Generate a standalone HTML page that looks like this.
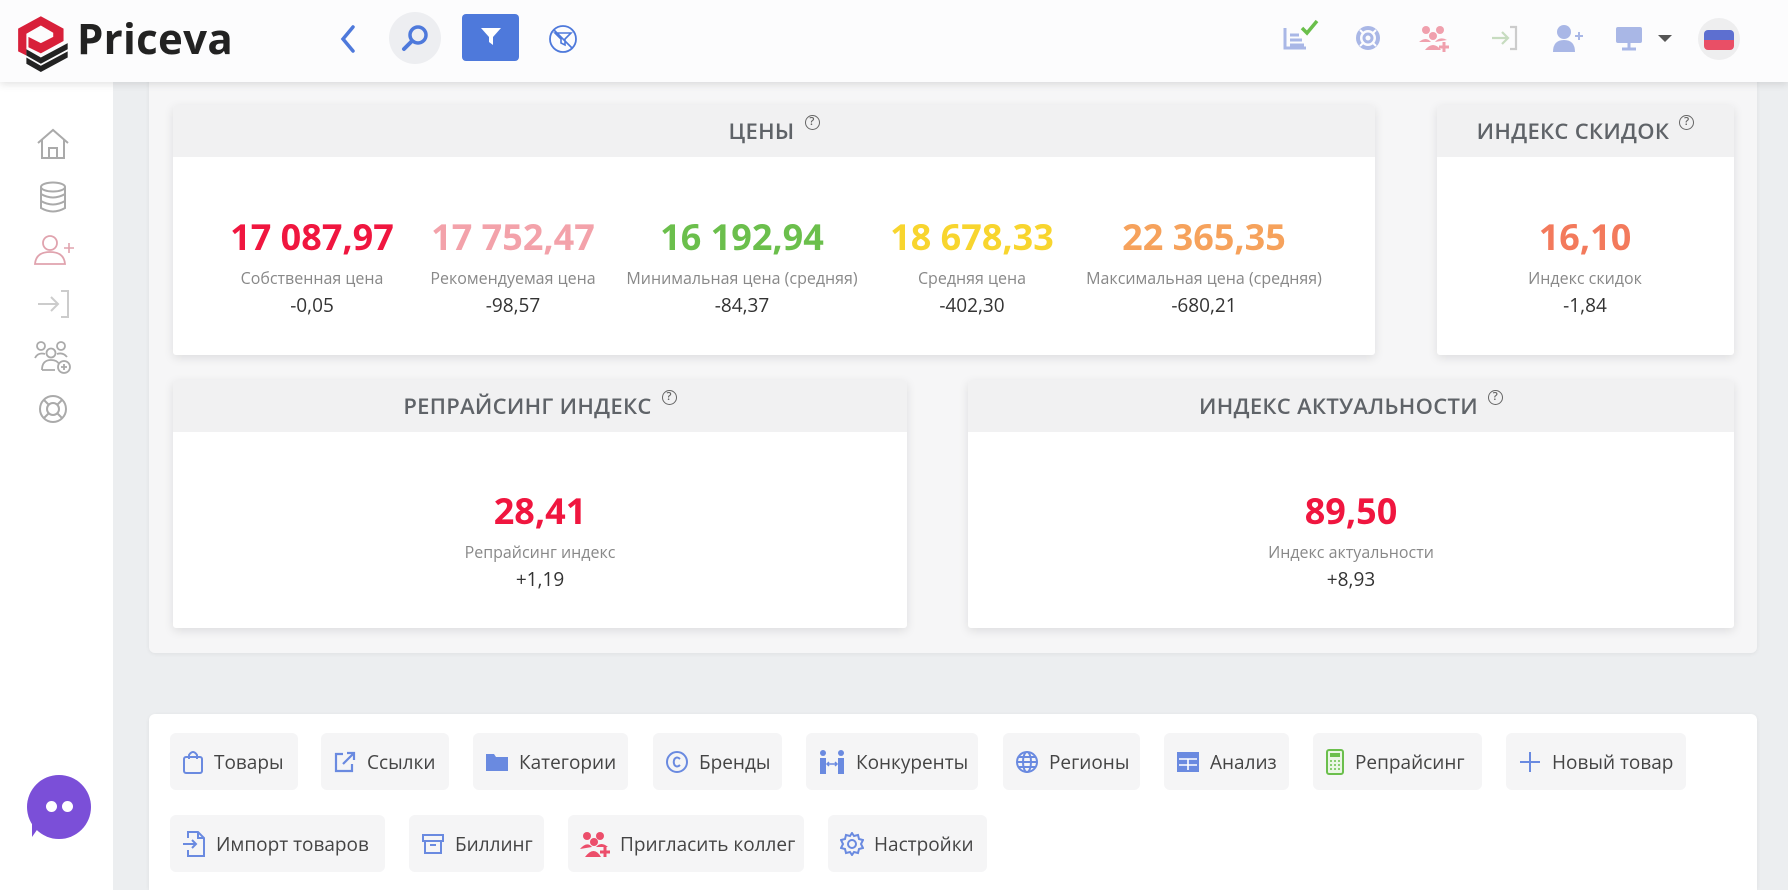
<!DOCTYPE html>
<html><head><meta charset="utf-8"><style>
*{box-sizing:border-box;margin:0;padding:0}
html,body{width:1788px;height:890px;overflow:hidden}
body{background:#eceef0;font-family:"Open Sans","Liberation Sans","DejaVu Sans",sans-serif;position:relative;color:#444}
.abs{position:absolute}
#hdr{left:0;top:0;width:1788px;height:82px;background:#fcfcfd;box-shadow:0 2px 8px rgba(0,0,0,.12);z-index:5}
#side{left:0;top:82px;width:113px;height:808px;background:#fff}
.panel{background:#f6f6f7;border-radius:6px;box-shadow:0 1px 4px rgba(0,0,0,.06)}
.card{background:#fff;box-shadow:0 3px 10px rgba(0,0,0,.10);border-radius:3px;overflow:hidden}
.card .h{height:52px;background:#f1f1f2;text-align:center;font-size:22px;font-weight:600;color:#5f6368;line-height:52px;letter-spacing:.3px}
.q{display:inline-block;width:15px;height:15px;border:1.5px solid #666;border-radius:50%;font-size:11px;line-height:12px;text-align:center;vertical-align:top;margin:10px 0 0 10px;font-weight:600;color:#666}
.m{position:absolute;text-align:center;transform:translateX(-50%);white-space:nowrap}
.v{font-size:36px;font-weight:700;line-height:40px}
.l{font-size:16px;color:#888;line-height:22px;margin-top:10px}
.d{font-size:19px;color:#333;line-height:28px;margin-top:2px}
.btn{position:absolute;height:57px;background:#f5f5f6;border-radius:6px;font-size:19px;color:#444;display:flex;align-items:center;padding-left:12px;white-space:nowrap}
.btn svg{margin-right:10px;flex:none}
</style></head><body>

<div id="hdr" class="abs">
 <svg class="abs" style="left:14px;top:8px" width="64" height="66" viewBox="0 0 62 60">
  <path d="M4 18 L26 6 L48 18 L48 30 L26 42 L14 36 L14 26 L26 32 L38 26 L38 22 L26 15 L12 23 L12 44 L4 40Z" fill="#d8203a"/>
  <path d="M12 38 L26 46 L52 32 L52 38 L26 52 L12 44Z" fill="#222"/>
  <path d="M12 46 L26 54 L52 40 L52 46 L26 60 L12 52Z" fill="#222"/>
 </svg>
 <div class="abs" style="left:77px;top:10px;font-size:42px;font-weight:700;color:#222;letter-spacing:.3px">Priceva</div>
 <svg class="abs" style="left:338px;top:24px" width="20" height="30"><path d="M15 3 L5 15 L15 27" stroke="#4e79db" stroke-width="3.5" fill="none" stroke-linecap="round"/></svg>
 <div class="abs" style="left:389px;top:12px;width:52px;height:52px;border-radius:50%;background:#edeef1"></div>
 <svg class="abs" style="left:400px;top:23px" width="30" height="30"><circle cx="18" cy="12" r="8" stroke="#4e79db" stroke-width="3.5" fill="none"/><path d="M12 18 L4 26" stroke="#4e79db" stroke-width="4" stroke-linecap="round"/></svg>
 <div class="abs" style="left:462px;top:14px;width:57px;height:47px;border-radius:4px;background:#4e79db"></div>
 <svg class="abs" style="left:479px;top:26px" width="24" height="22"><path d="M2 2 H22 L14 11 V19 L10 16 V11Z" fill="#fff"/></svg>
 <svg class="abs" style="left:548px;top:24px" width="30" height="30"><circle cx="15" cy="15" r="13" stroke="#4e79db" stroke-width="1.8" fill="none"/><path d="M7 9 H23 L17 15 V21 L13 19 V15Z M6 6 L24 24" stroke="#4e79db" stroke-width="1.6" fill="none"/></svg>

 <svg class="abs" style="left:1282px;top:16px" width="42" height="36"><path d="M3 12 V32 H24 M8 19 H17 M8 24 H20 M8 29 H22" stroke="#a9b7e6" stroke-width="3" fill="none"/><path d="M20 12 L25 17 L35 5" stroke="#6abf4b" stroke-width="3.5" fill="none"/></svg>
 <svg class="abs" style="left:1354px;top:24px" width="28" height="28"><circle cx="14" cy="14" r="10" stroke="#a9b7e6" stroke-width="4" fill="none"/><circle cx="14" cy="14" r="4" stroke="#a9b7e6" stroke-width="3" fill="none"/><path d="M6 6 L10 10 M22 6 L18 10 M6 22 L10 18 M22 22 L18 18" stroke="#fff" stroke-width="2"/></svg>
 <svg class="abs" style="left:1418px;top:24px" width="36" height="28" fill="#f0a0ad"><circle cx="8" cy="6" r="4"/><circle cx="22" cy="6" r="4"/><circle cx="15" cy="12" r="4"/><path d="M1 18 Q8 12 13 18Z M17 18 Q22 12 29 16Z M7 26 Q15 16 23 26Z"/><path d="M26 18 V28 M21 23 H31" stroke="#f0a0ad" stroke-width="3"/></svg>
 <svg class="abs" style="left:1490px;top:24px" width="30" height="28"><path d="M2 14 H18 M12 8 L18 14 L12 20" stroke="#c7dcc0" stroke-width="2.2" fill="none"/><path d="M20 3 H26 V25 H20" stroke="#ccc" stroke-width="2.2" fill="none"/></svg>
 <svg class="abs" style="left:1552px;top:24px" width="32" height="28" fill="#a9b7e6"><circle cx="12" cy="8" r="7"/><path d="M1 28 Q1 16 12 16 Q23 16 23 28Z"/><path d="M27 8 V16 M23 12 H31" stroke="#a9b7e6" stroke-width="2"/></svg>
 <svg class="abs" style="left:1614px;top:25px" width="30" height="26"><rect x="2" y="2" width="26" height="16" rx="2" fill="#a9b7e6"/><path d="M15 18 V23 M8 24 H22" stroke="#a9b7e6" stroke-width="3"/></svg>
 <svg class="abs" style="left:1658px;top:35px" width="14" height="8"><path d="M0 0 H14 L7 7Z" fill="#555"/></svg>
 <div class="abs" style="left:1698px;top:18px;width:42px;height:42px;border-radius:50%;background:#eeeeef"></div>
 <div class="abs" style="left:1704px;top:30px;width:30px;height:20px;border-radius:4px;overflow:hidden;background:linear-gradient(#5d6fd0 0 50%,#e94f66 50%)"></div>
</div>

<div id="side" class="abs">
 <svg class="abs" style="left:35px;top:46px" width="36" height="32"><path d="M3 15 L18 2 L33 15 M7 12 V30 H29 V12 M14 30 V20 H22 V30" stroke="#aaa" stroke-width="2" fill="none"/></svg>
 <svg class="abs" style="left:38px;top:99px" width="30" height="34"><ellipse cx="15" cy="6" rx="12" ry="4.5" stroke="#aaa" stroke-width="2" fill="none"/><path d="M3 6 V27 Q15 34 27 27 V6 M3 13 Q15 20 27 13 M3 20 Q15 27 27 20" stroke="#aaa" stroke-width="2" fill="none"/></svg>
 <svg class="abs" style="left:32px;top:152px" width="42" height="32"><circle cx="18" cy="9" r="7" stroke="#e0a3ae" stroke-width="1.8" fill="none"/><path d="M3 30 Q4 18 18 18 Q32 18 33 30Z" stroke="#e0a3ae" stroke-width="1.8" fill="none"/><path d="M37 9 V19 M32 14 H42" stroke="#e0a3ae" stroke-width="1.6"/></svg>
 <svg class="abs" style="left:36px;top:206px" width="36" height="32"><path d="M2 16 H22 M15 9 L22 16 L15 23" stroke="#ccc" stroke-width="2" fill="none"/><path d="M25 3 H32 V29 H25" stroke="#ccc" stroke-width="2" fill="none"/></svg>
 <svg class="abs" style="left:33px;top:258px" width="40" height="34" stroke="#aaa" stroke-width="1.8" fill="none"><circle cx="8" cy="6" r="4"/><circle cx="28" cy="6" r="4"/><circle cx="18" cy="13" r="4.5"/><path d="M2 18 Q5 12 12 14 M34 17 Q30 12 24 14 M9 30 Q9 20 18 20 Q24 20 26 24 M9 30 H22"/><circle cx="31" cy="27" r="6"/><path d="M31 24 V30 M28 27 H34"/></svg>
 <svg class="abs" style="left:37px;top:311px" width="32" height="32"><circle cx="16" cy="16" r="13" stroke="#aaa" stroke-width="2" fill="none"/><circle cx="16" cy="16" r="6" stroke="#aaa" stroke-width="2" fill="none"/><path d="M7 7 L12 12 M25 7 L20 12 M7 25 L12 20 M25 25 L20 20" stroke="#aaa" stroke-width="2"/></svg>
 <div class="abs" style="left:27px;top:693px;width:64px;height:64px;border-radius:50%;background:#7b4fd8"></div>
 <div class="abs" style="left:32px;top:735px;width:0;height:0;border-left:14px solid #7b4fd8;border-bottom:20px solid transparent"></div>
 <div class="abs" style="left:46px;top:719px;width:11px;height:11px;border-radius:50%;background:#fff"></div>
 <div class="abs" style="left:62px;top:719px;width:11px;height:11px;border-radius:50%;background:#fff"></div>
</div>

<div class="abs panel" style="left:149px;top:70px;width:1608px;height:583px"></div>
<div class="abs panel" style="left:149px;top:714px;width:1608px;height:176px;background:#fff;border-radius:6px 6px 0 0"></div>

<div class="abs card" style="left:173px;top:105px;width:1202px;height:250px">
 <div class="h">ЦЕНЫ<span class="q">?</span></div>
 <div class="m" style="left:139px;top:112px"><div class="v" style="color:#f0163f">17 087,97</div><div class="l">Собственная цена</div><div class="d">-0,05</div></div>
 <div class="m" style="left:340px;top:112px"><div class="v" style="color:#f3a2aa">17 752,47</div><div class="l">Рекомендуемая цена</div><div class="d">-98,57</div></div>
 <div class="m" style="left:569px;top:112px"><div class="v" style="color:#6bbf4c">16 192,94</div><div class="l">Минимальная цена (средняя)</div><div class="d">-84,37</div></div>
 <div class="m" style="left:799px;top:112px"><div class="v" style="color:#f8d52e">18 678,33</div><div class="l">Средняя цена</div><div class="d">-402,30</div></div>
 <div class="m" style="left:1031px;top:112px"><div class="v" style="color:#f6a25c">22 365,35</div><div class="l">Максимальная цена (средняя)</div><div class="d">-680,21</div></div>
</div>

<div class="abs card" style="left:1437px;top:105px;width:297px;height:250px">
 <div class="h">ИНДЕКС СКИДОК<span class="q">?</span></div>
 <div class="m" style="left:148px;top:112px"><div class="v" style="color:#f37a5c">16,10</div><div class="l">Индекс скидок</div><div class="d">-1,84</div></div>
</div>

<div class="abs card" style="left:173px;top:380px;width:734px;height:248px">
 <div class="h">РЕПРАЙСИНГ ИНДЕКС<span class="q">?</span></div>
 <div class="m" style="left:367px;top:111px"><div class="v" style="color:#f0163f">28,41</div><div class="l">Репрайсинг индекс</div><div class="d">+1,19</div></div>
</div>

<div class="abs card" style="left:968px;top:380px;width:766px;height:248px">
 <div class="h">ИНДЕКС АКТУАЛЬНОСТИ<span class="q">?</span></div>
 <div class="m" style="left:383px;top:111px"><div class="v" style="color:#f0163f">89,50</div><div class="l">Индекс актуальности</div><div class="d">+8,93</div></div>
</div>

<div class="btn" style="left:170px;top:733px;width:128px"><svg width="22" height="26" stroke="#6a8ae0" stroke-width="2" fill="none"><rect x="2" y="8" width="18" height="16" rx="2"/><path d="M7 10 V6 Q11 0 15 6 V10"/></svg>Товары</div>
<div class="btn" style="left:321px;top:733px;width:128px"><svg width="24" height="24" stroke="#6a8ae0" stroke-width="2.2" fill="none"><path d="M10 4 H3 V21 H19 V14 M10 14 L21 3 M14 3 H21 V10"/></svg>Ссылки</div>
<div class="btn" style="left:473px;top:733px;width:155px"><svg width="24" height="22"><path d="M1 3 H9 L11 6 H23 V20 H1Z" fill="#6a8ae0"/></svg>Категории</div>
<div class="btn" style="left:653px;top:733px;width:129px"><svg width="24" height="24"><circle cx="12" cy="12" r="10" stroke="#6a8ae0" stroke-width="2" fill="none"/><path d="M15 9 Q12 6 9.5 9 Q8 12 9.5 15 Q12 18 15 15" stroke="#6a8ae0" stroke-width="2" fill="none"/></svg>Бренды</div>
<div class="btn" style="left:806px;top:733px;width:172px"><svg width="28" height="26" fill="#6a8ae0"><circle cx="5" cy="4" r="3"/><circle cx="23" cy="4" r="3"/><rect x="2" y="9" width="6" height="16"/><rect x="20" y="9" width="6" height="16"/><path d="M9 15 H19 M11 13 L9 15 L11 17 M17 13 L19 15 L17 17" stroke="#6a8ae0" stroke-width="1.5" fill="none"/></svg>Конкуренты</div>
<div class="btn" style="left:1003px;top:733px;width:137px"><svg width="24" height="24" stroke="#6a8ae0" stroke-width="2" fill="none"><circle cx="12" cy="12" r="10"/><ellipse cx="12" cy="12" rx="4" ry="10"/><path d="M2 12 H22 M4 7 H20 M4 17 H20"/></svg>Регионы</div>
<div class="btn" style="left:1164px;top:733px;width:125px"><svg width="24" height="24"><rect x="1" y="2" width="22" height="20" fill="#6a8ae0"/><path d="M3 9 H21 M12 9 V20 M3 15 H21" stroke="#fff" stroke-width="1.6"/></svg>Анализ</div>
<div class="btn" style="left:1313px;top:733px;width:169px"><svg width="20" height="26"><rect x="2" y="1" width="16" height="24" rx="2" stroke="#6bbf4c" stroke-width="2" fill="#eaf6e5"/><rect x="5" y="4" width="10" height="4" fill="#6bbf4c"/><path d="M5 12 H15 M5 16 H15 M5 20 H15" stroke="#6bbf4c" stroke-width="1.6" stroke-dasharray="2 2"/></svg>Репрайсинг</div>
<div class="btn" style="left:1506px;top:733px;width:180px"><svg width="24" height="24"><path d="M12 2 V22 M2 12 H22" stroke="#6a8ae0" stroke-width="2"/></svg>Новый товар</div>

<div class="btn" style="left:170px;top:815px;width:215px"><svg width="24" height="28" stroke="#6a8ae0" stroke-width="2" fill="none"><path d="M6 8 V2 H16 L22 8 V26 H6 V20 M16 2 V8 H22 M1 14 H14 M10 10 L14 14 L10 18"/></svg>Импорт товаров</div>
<div class="btn" style="left:409px;top:815px;width:135px"><svg width="24" height="24" stroke="#6a8ae0" stroke-width="2" fill="none"><rect x="2" y="3" width="20" height="6"/><path d="M4 9 V21 H20 V9 M9 13 H15"/></svg>Биллинг</div>
<div class="btn" style="left:568px;top:815px;width:236px"><svg width="30" height="26" fill="#ec4e6b"><circle cx="7" cy="5" r="4"/><circle cx="20" cy="5" r="4"/><circle cx="14" cy="11" r="4"/><path d="M0 18 Q7 10 12 16Z M16 16 Q21 10 28 16Z M5 26 Q14 14 21 26Z"/><path d="M25 16 V26 M20 21 H30" stroke="#ec4e6b" stroke-width="3"/></svg>Пригласить коллег</div>
<div class="btn" style="left:828px;top:815px;width:159px"><svg width="24" height="24" stroke="#6a8ae0" stroke-width="2" fill="none"><circle cx="12" cy="12" r="4"/><path d="M12 1 L14 4 L18 3 L19 7 L23 8 L21 12 L23 16 L19 17 L18 21 L14 20 L12 23 L10 20 L6 21 L5 17 L1 16 L3 12 L1 8 L5 7 L6 3 L10 4Z"/></svg>Настройки</div>

</body></html>
